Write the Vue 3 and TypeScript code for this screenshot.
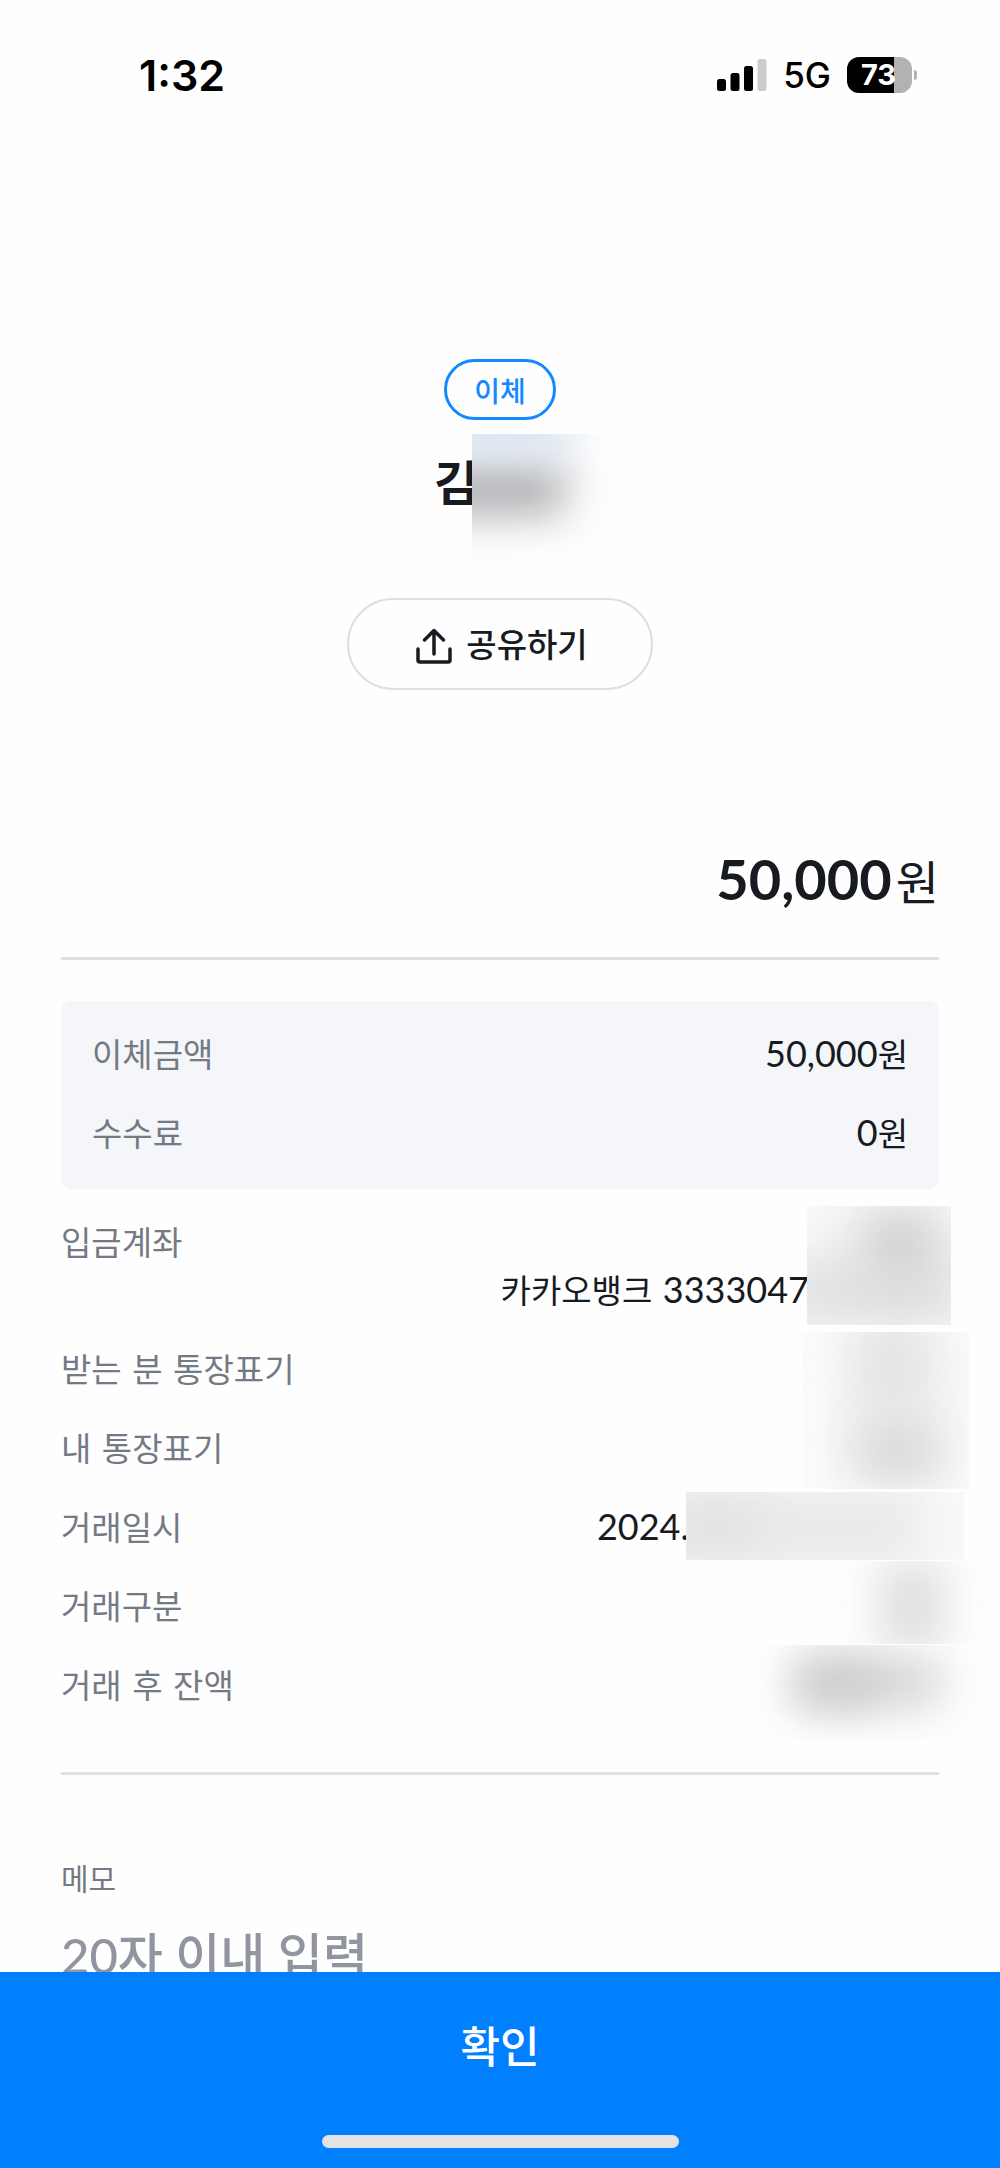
<script setup lang="ts">
import { ref } from 'vue'

interface DetailRow {
  label: string
  number?: string
  mask: string
}

const memo = ref('')

const rows: DetailRow[] = [
  { label: '받는 분 통장표기', mask: 'mask-names' },
  { label: '내 통장표기', mask: '' },
  { label: '거래일시', number: '2024.', mask: 'mask-date' },
  { label: '거래구분', mask: 'mask-kind' },
  { label: '거래 후 잔액', mask: 'mask-balance' },
]
</script>

<template>
  <div class="screen">
    <header class="status">
      <span class="time">1:32</span>
      <div class="indicators">
        <svg class="signal" viewBox="0 0 50 32" aria-hidden="true">
          <rect x="0" y="20" width="9" height="12" rx="2.5" />
          <rect x="13.5" y="14" width="9" height="18" rx="2.5" />
          <rect x="27" y="7" width="9" height="25" rx="2.5" />
          <rect x="40.5" y="0" width="9" height="32" rx="2.5" fill="#cccccc" />
        </svg>
        <span class="network">5G</span>
        <span class="battery"><span class="level">73</span></span>
      </div>
    </header>

    <main class="content">
      <section class="summary">
        <span class="badge">이체</span>
        <h1 class="name">김<span class="mask mask-name"></span></h1>
        <button class="share" type="button">
          <svg class="share-icon" viewBox="0 0 36 36" aria-hidden="true">
            <path d="M2 21V32Q2 34 4 34H32Q34 34 34 32V21" />
            <path d="M18 26V3M8.500 12 18 2.500 27.500 12" />
          </svg>
          <span class="share-text">공유하기</span>
        </button>
      </section>

      <p class="total"><span class="total-number">50,000</span><span>원</span></p>

      <dl class="box">
        <div class="row">
          <dt>이체금액</dt>
          <dd><span class="num">50,000</span>원</dd>
        </div>
        <div class="row">
          <dt>수수료</dt>
          <dd><span class="num">0</span>원</dd>
        </div>
      </dl>

      <dl class="details">
        <div class="row account">
          <dt>입금계좌</dt>
          <dd class="account-value">카카오뱅크 <span class="num">3333047</span><span class="mask mask-account"></span></dd>
        </div>
        <div v-for="row in rows" :key="row.label" class="row">
          <dt>{{ row.label }}</dt>
          <dd :class="{ 'date-value': row.number }">
            <span v-if="row.number" class="num">{{ row.number }}</span>
            <span v-if="row.mask" class="mask" :class="row.mask"></span>
          </dd>
        </div>
      </dl>

      <section class="memo">
        <label for="memo">메모</label>
        <input id="memo" v-model="memo" type="text" maxlength="20" placeholder="20자 이내 입력" />
      </section>
    </main>

    <footer class="footer">
      <button class="confirm" type="button">확인</button>
      <span class="home"></span>
    </footer>
  </div>
</template>

<style>
body {
  margin: 0;
  background: #fefefe;
}
</style>

<style scoped>
.screen {
  display: flex;
  flex-direction: column;
  height: 100vh;
  overflow: hidden;
  background: #fefefe;
  color: #171a21;
  font-family: "DejaVu Sans", "Noto Sans CJK KR", sans-serif;
}

.status {
  display: flex;
  flex: none;
  align-items: center;
  justify-content: space-between;
  height: 150px;
  padding: 0 82px 0 139px;
  color: #000;
  font-family: Inter, sans-serif;
}

.time {
  font-size: 43px;
  font-weight: 600;
}

.indicators {
  display: flex;
  align-items: center;
}

.signal {
  width: 50px;
  height: 32px;
}

.network {
  margin: 0 16px;
  font-size: 35px;
  font-weight: 500;
}

.battery {
  position: relative;
  box-sizing: border-box;
  width: 65px;
  height: 36px;
  margin-right: 6px;
  padding-right: 2px;
  border-radius: 12px;
  background: linear-gradient(90deg, #000 72%, #b2b2b2 72%);
  color: #fff;
  font-size: 29px;
  font-weight: 700;
  line-height: 36px;
  text-align: center;
}

.battery::after {
  position: absolute;
  top: 13px;
  right: -5px;
  width: 3px;
  height: 10px;
  border-radius: 0 4px 4px 0;
  background: #b2b2b2;
  content: "";
}

.content {
  flex: 1;
  min-height: 0;
  padding: 209px 61px 0;
  overflow: hidden;
}

.summary {
  display: flex;
  flex-direction: column;
  align-items: center;
}

.badge {
  box-sizing: border-box;
  width: 112px;
  height: 61px;
  border: 3px solid #1289ff;
  border-radius: 31px;
  color: #1289ff;
  font-size: 28px;
  font-weight: 500;
  line-height: 62px;
  text-align: center;
}

.name {
  position: relative;
  width: 132px;
  margin: 28px 0 0;
  font-size: 48px;
  font-weight: 700;
  line-height: 72px;
}

.share {
  display: flex;
  align-items: center;
  justify-content: center;
  gap: 14px;
  box-sizing: border-box;
  width: 306px;
  height: 92px;
  margin-top: 78px;
  padding: 3px 0 0 4px;
  border: 2px solid #dcdfe5;
  border-radius: 46px;
  background: #fefefe;
  color: #171a21;
  font-family: inherit;
  font-size: 33px;
  font-weight: 500;
}

.share-text {
  padding-bottom: 6px;
}

.share-icon {
  width: 36px;
  height: 36px;
  fill: none;
  stroke: #171a21;
  stroke-width: 3.5;
  stroke-linecap: round;
  stroke-linejoin: round;
}

.total {
  display: flex;
  align-items: baseline;
  justify-content: flex-end;
  gap: 4px;
  height: 80px;
  margin: 149px 0 0;
  padding-bottom: 38px;
  border-bottom: 3px solid #dcdfe4;
  font-size: 47px;
  line-height: 80px;
}

.total-number {
  font-family: Lato, sans-serif;
  font-size: 56px;
  font-weight: 700;
}

.box,
.details {
  margin: 0;
}

.box {
  margin-top: 41px;
  padding: 15px 31px;
  border-radius: 10px;
  background: #f4f6fa;
}

.details {
  padding: 15px 0 46px;
  border-bottom: 3px solid #e0e2e6;
}

.row {
  position: relative;
  display: flex;
  justify-content: space-between;
  height: 79px;
  font-size: 33px;
  line-height: 79px;
}

dt {
  color: #747a84;
}

dd {
  margin: 0;
}

.num {
  font-family: Lato, sans-serif;
  font-size: 36px;
  line-height: 1;
}

.account {
  height: 127px;
}

.account-value {
  padding: 48px 130px 0 0;
}

.date-value {
  padding-right: 250px;
}

/* Soft patches that hide private values */
.mask {
  position: absolute;
  z-index: 1;
  overflow: hidden;
  background: #fefefe;
}

.mask::before,
.mask::after {
  position: absolute;
  content: "";
}

.mask-name {
  top: -14px;
  left: 38px;
  width: 145px;
  height: 127px;
}

.mask-name::before {
  top: 30px;
  left: -50px;
  width: 142px;
  height: 50px;
  background: #a9aaad;
  filter: blur(22px);
}

.mask-name::after {
  top: -30px;
  left: -30px;
  width: 130px;
  height: 50px;
  background: #d8e4f2;
  filter: blur(20px);
}

.mask-account {
  top: 2px;
  right: -12px;
  width: 144px;
  height: 119px;
  background: #f8f8f8;
}

.mask-account::before {
  top: 6px;
  left: 56px;
  width: 74px;
  height: 76px;
  background: #cbcccd;
  filter: blur(26px);
}

.mask-account::after {
  top: 60px;
  left: -30px;
  width: 180px;
  height: 50px;
  background: #dadadb;
  filter: blur(26px);
}

.mask-names {
  top: 1px;
  right: -31px;
  width: 168px;
  height: 157px;
  background: #fcfcfc;
}

.mask-names::before {
  top: -20px;
  left: 46px;
  width: 90px;
  height: 100px;
  background: #e3e3e3;
  filter: blur(26px);
}

.mask-names::after {
  top: 90px;
  left: 50px;
  width: 90px;
  height: 60px;
  background: #d2d2d3;
  filter: blur(26px);
}

.mask-date {
  top: 3px;
  right: -25px;
  width: 278px;
  height: 68px;
  background: #fafafa;
}

.mask-date::before {
  top: -10px;
  left: -40px;
  width: 280px;
  height: 90px;
  background: #e9eaea;
  filter: blur(24px);
}

.mask-date::after {
  top: 16px;
  left: -10px;
  width: 80px;
  height: 36px;
  background: #dfe0e0;
  filter: blur(22px);
}

.mask-kind {
  top: -7px;
  right: -46px;
  width: 148px;
  height: 83px;
}

.mask-kind::before {
  top: 0;
  left: 42px;
  width: 66px;
  height: 90px;
  background: #dedede;
  filter: blur(22px);
}

.mask-balance {
  top: -2px;
  right: -46px;
  width: 250px;
  height: 97px;
}

.mask-balance::before {
  top: 12px;
  left: 60px;
  width: 146px;
  height: 50px;
  background: #d3d4d5;
  filter: blur(22px);
}

.mask-balance::after {
  top: 24px;
  left: 66px;
  width: 76px;
  height: 32px;
  background: #c6c7c8;
  filter: blur(22px);
}

.memo {
  display: flex;
  flex-direction: column;
  padding-top: 80px;
}

.memo label {
  color: #747a84;
  font-size: 30px;
  line-height: 50px;
}

.memo input {
  width: 100%;
  height: 80px;
  margin-top: 10px;
  padding: 0;
  border: 0;
  outline: 0;
  background: transparent;
  color: #171a21;
  font-family: Lato, "Noto Sans CJK KR", sans-serif;
  font-size: 49px;
  font-weight: 500;
}

.memo input::placeholder {
  color: #9095a0;
  opacity: 1;
}

.footer {
  display: flex;
  flex: none;
  flex-direction: column;
  align-items: center;
  height: 196px;
  background: #007fff;
}

.confirm {
  width: 100%;
  height: 148px;
  padding: 0 0 4px;
  border: 0;
  background: transparent;
  color: #fff;
  font-family: inherit;
  font-size: 43px;
  font-weight: 500;
}

.home {
  width: 357px;
  height: 13px;
  margin-top: 15px;
  border-radius: 7px;
  background: #e3e3e3;
}
</style>
